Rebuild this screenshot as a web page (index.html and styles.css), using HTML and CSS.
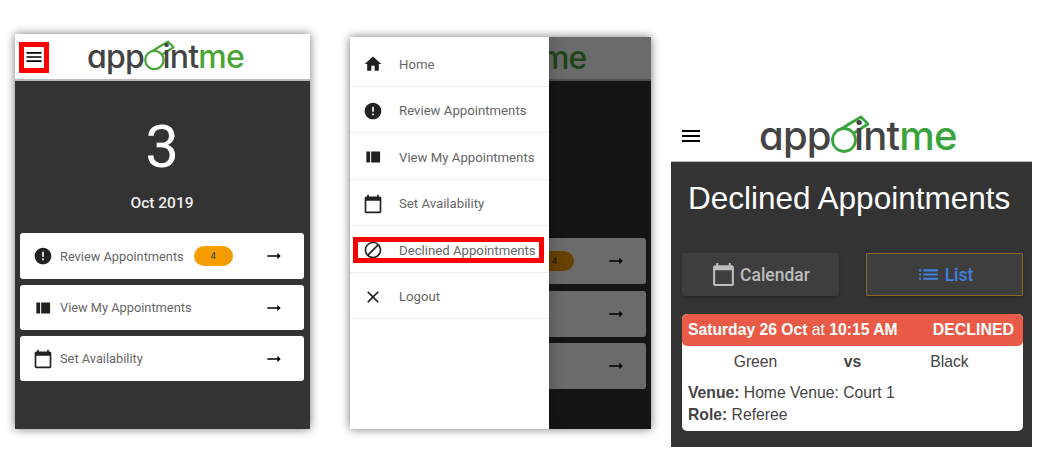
FILE: index.html
```html
<!DOCTYPE html>
<html lang="en">
  <head>
    <meta charset="UTF-8" />
    <meta name="viewport" content="width=device-width, initial-scale=1.0" />
    <title>Appointme help</title>
    <link rel="stylesheet" href="styles.css">
  </head>
  <body>
    <!-- Shared icons -->
    <svg class="icon-defs" aria-hidden="true">
      <symbol id="i-menu" viewBox="0 0 24 24"><path d="M3 18h18v-2H3v2zm0-5h18v-2H3v2zm0-7v2h18V6H3z"/></symbol>
      <symbol id="i-home" viewBox="0 0 24 24"><path d="M10 20v-6h4v6h5v-8h3L12 3 2 12h3v8z"/></symbol>
      <symbol id="i-error" viewBox="0 0 24 24"><path d="M12 2C6.48 2 2 6.48 2 12s4.48 10 10 10 10-4.48 10-10S17.52 2 12 2zm1 15h-2v-2h2v2zm0-4h-2V7h2v6z"/></symbol>
      <symbol id="i-view" viewBox="0 0 24 24"><path d="M4 5.500h4.500v13H4zM9.800 5.500H20.500v13H9.800z"/></symbol>
      <symbol id="i-calendar" viewBox="0 0 24 24"><path d="M20 3h-1V1h-2v2H7V1H5v2H4c-1.100 0-2 .9-2 2v16c0 1.100.9 2 2 2h16c1.100 0 2-.9 2-2V5c0-1.100-.9-2-2-2zm0 18H4V8h16v13z"/></symbol>
      <symbol id="i-arrow" viewBox="0 0 24 24"><path d="M16.010 11H4v2h12.010v3L20 12l-3.990-4z"/></symbol>
      <symbol id="i-block" viewBox="0 0 24 24"><path d="M12 2C6.480 2 2 6.480 2 12s4.480 10 10 10 10-4.480 10-10S17.520 2 12 2zM4 12c0-4.420 3.580-8 8-8 1.850 0 3.550.63 4.900 1.690L5.690 16.900C4.630 15.550 4 13.850 4 12zm8 8c-1.850 0-3.550-.63-4.900-1.690L18.310 7.100C19.370 8.450 20 10.150 20 12c0 4.420-3.580 8-8 8z"/></symbol>
      <symbol id="i-close" viewBox="0 0 24 24"><path d="M19 6.410L17.590 5 12 10.590 6.410 5 5 6.410 10.590 12 5 17.590 6.410 19 12 13.410 17.590 19 19 17.590 13.410 12z"/></symbol>
      <symbol id="i-list" viewBox="0 0 24 24"><path d="M3 13h2v-2H3v2zm0 4h2v-2H3v2zm0-8h2V7H3v2zm4 4h14v-2H7v2zm0 4h14v-2H7v2zM7 7v2h14V7H7z"/></symbol>
      <symbol id="i-whistle" viewBox="0 0 40 38"><path d="M9 15L18 9L30 2L37 9L23 18" fill="none" stroke="currentColor" stroke-width="2.800" stroke-linejoin="round"/><circle cx="13" cy="25" r="11.500" fill="#fff" stroke="currentColor" stroke-width="2.800"/></symbol>
    </svg>

    <div class="shots">
      <!-- Home screen -->
      <section class="phone phone-home">
        <header class="top-bar">
          <button class="menu-btn menu-btn-marked"><svg class="icon"><use href="#i-menu"/></svg></button>
          <div class="logo"><span>app</span><svg class="whistle"><use href="#i-whistle"/></svg><span>int</span><span class="logo-green">me</span></div>
        </header>
        <div class="home-body">
          <div class="day">3</div>
          <div class="month">Oct 2019</div>
          <div class="home-list">
            <a class="home-row"><svg class="icon"><use href="#i-error"/></svg><span class="row-label">Review Appointments</span><span class="badge">4</span><svg class="icon row-arrow"><use href="#i-arrow"/></svg></a>
            <a class="home-row"><svg class="icon"><use href="#i-view"/></svg><span class="row-label">View My Appointments</span><svg class="icon row-arrow"><use href="#i-arrow"/></svg></a>
            <a class="home-row"><svg class="icon"><use href="#i-calendar"/></svg><span class="row-label">Set Availability</span><svg class="icon row-arrow"><use href="#i-arrow"/></svg></a>
          </div>
        </div>
      </section>

      <!-- Same screen with the drawer open, only what shows past the drawer -->
      <section class="phone phone-drawer">
        <header class="top-bar">
          <div class="logo"><span class="logo-green">me</span></div>
        </header>
        <div class="home-list">
          <a class="home-row"><span class="badge">4</span><svg class="icon row-arrow"><use href="#i-arrow"/></svg></a>
          <a class="home-row"><svg class="icon row-arrow"><use href="#i-arrow"/></svg></a>
          <a class="home-row"><svg class="icon row-arrow"><use href="#i-arrow"/></svg></a>
        </div>
        <div class="scrim"></div>
        <nav class="drawer">
          <a class="drawer-item"><svg class="icon"><use href="#i-home"/></svg>Home</a>
          <a class="drawer-item"><svg class="icon"><use href="#i-error"/></svg>Review Appointments</a>
          <a class="drawer-item"><svg class="icon"><use href="#i-view"/></svg>View My Appointments</a>
          <a class="drawer-item"><svg class="icon"><use href="#i-calendar"/></svg>Set Availability</a>
          <a class="drawer-item drawer-item-marked"><svg class="icon"><use href="#i-block"/></svg>Declined Appointments</a>
          <a class="drawer-item"><svg class="icon"><use href="#i-close"/></svg>Logout</a>
        </nav>
      </section>

      <!-- Declined appointments screen -->
      <section class="phone-declined">
        <header class="declined-bar">
          <button class="menu-btn"><svg class="icon"><use href="#i-menu"/></svg></button>
          <div class="logo logo-large"><span>app</span><svg class="whistle"><use href="#i-whistle"/></svg><span>int</span><span class="logo-green">me</span></div>
        </header>
        <div class="declined-body">
          <h1>Declined Appointments</h1>
          <div class="view-switch">
            <button class="view-btn"><svg class="icon"><use href="#i-calendar"/></svg>Calendar</button>
            <button class="view-btn view-btn-active"><svg class="icon"><use href="#i-list"/></svg>List</button>
          </div>
          <article class="card">
            <div class="card-head">
              <span><b>Saturday 26 Oct</b> at <b>10:15 AM</b></span>
              <b class="card-status">DECLINED</b>
            </div>
            <div class="teams"><span>Green</span><b>vs</b><span>Black</span></div>
            <p><b>Venue:</b> Home Venue: Court 1</p>
            <p><b>Role:</b> Referee</p>
          </article>
        </div>
      </section>
    </div>
  </body>
</html>
```

FILE: styles.css
```css
/* Basic reset */
body {
  margin: 0;
  background-color: #fff;
  font-family: Roboto, sans-serif;
  color: #333;
}

.icon-defs {
  display: none;
}

.icon {
  width: 20px;
  height: 20px;
  flex: none;
  fill: currentColor;
}

.shots {
  display: flex;
  align-items: flex-start;
}

/* Phone frames */
.phone {
  position: relative;
  display: flex;
  flex-direction: column;
  overflow: hidden;
  background-color: #333;
  box-shadow: 0 0 9px rgba(0, 0, 0, 0.55);
}

.phone-home {
  width: 295px;
  height: 395px;
  margin: 34px 0 0 15px;
}

.phone-drawer {
  width: 301px;
  height: 392px;
  margin: 37px 0 0 40px;
}

.top-bar {
  display: flex;
  align-items: center;
  height: 47px;
  box-sizing: border-box;
  flex: none;
  background-color: #fff;
  border-bottom: 2px solid #b9b9b9;
}

.phone-drawer .top-bar {
  height: 44px;
}

.menu-btn {
  display: flex;
  align-items: center;
  justify-content: center;
  padding: 0;
  border: none;
  background: none;
  color: #000;
}

.menu-btn-marked {
  width: 30px;
  height: 31px;
  box-sizing: border-box;
  margin: 1px 0 0 4px;
  border: 5px solid #f00;
}

.logo {
  margin-left: 38px;
  font-family: Inter, sans-serif;
  font-size: 32px;
  font-weight: 500;
  font-feature-settings: "cv11";
  line-height: 1;
  letter-spacing: -0.8px;
  color: #444;
  white-space: nowrap;
}

.phone-drawer .logo {
  margin-left: 191px;
}

.logo-green {
  color: #4aa537;
}

.whistle {
  width: 1em;
  height: 0.95em;
  margin-right: -0.42em;
  vertical-align: -0.07em;
  color: #4aa537;
}

/* Home screen */
.home-body {
  display: flex;
  flex-direction: column;
  align-items: center;
  padding: 31px 6px 0 5px;
}

.day {
  font-size: 60px;
  line-height: 70px;
  color: #fff;
}

.month {
  margin-top: 11px;
  font-size: 15.500px;
  font-weight: 500;
  line-height: 20px;
  color: #eee;
}

.home-list {
  display: flex;
  flex-direction: column;
  gap: 6px;
  align-self: stretch;
  margin-top: 20px;
}

.phone-drawer .home-list {
  gap: 6.5px;
  margin: 157px 5px 0;
}

.home-row {
  display: flex;
  align-items: center;
  height: 45px;
  padding: 0 20px 0 13px;
  border-radius: 3px;
  background-color: #fff;
  color: #222;
}

.phone-home .home-row:first-child,
.phone-drawer .home-row {
  height: 46px;
}

.row-label {
  margin-left: 7px;
  font-size: 12.800px;
  color: #666;
}

.badge {
  width: 39px;
  height: 20px;
  margin-left: 10px;
  border-radius: 10px;
  background-color: #f59d00;
  font-size: 9px;
  line-height: 21px;
  text-align: center;
  color: #333;
}

.phone-drawer .badge {
  margin-left: auto;
}

.row-arrow {
  margin-left: auto;
  color: #000;
}

.phone-drawer .badge + .row-arrow {
  margin-left: 32px;
}

/* Drawer */
.scrim {
  position: absolute;
  inset: 0;
  background-color: rgba(0, 0, 0, 0.58);
}

.drawer {
  position: absolute;
  top: 0;
  left: 0;
  bottom: 0;
  width: 199px;
  background-color: #fff;
  box-shadow: 0 0 14px rgba(0, 0, 0, 0.3);
}

.drawer-item {
  position: relative;
  display: flex;
  align-items: center;
  gap: 16px;
  height: 46.500px;
  box-sizing: border-box;
  padding: 3px 0 0 13px;
  border-bottom: 1px solid #eee;
  font-size: 13.200px;
  color: #666;
}

.drawer-item:first-child {
  height: 49.500px;
  padding-top: 6px;
}

.drawer-item .icon {
  color: #222;
}

.drawer-item-marked::after {
  content: "";
  position: absolute;
  top: 11px;
  left: 3px;
  width: 191px;
  height: 26px;
  box-sizing: border-box;
  border: 5px solid #f00;
}

/* Declined appointments */
.phone-declined {
  width: 361px;
  margin: 115px 0 0 20px;
}

.declined-bar {
  display: flex;
  align-items: center;
  height: 47px;
  box-sizing: border-box;
  padding: 0 0 4px 8px;
  border-bottom: 1px solid #bbb;
}

.declined-bar .icon {
  width: 24px;
  height: 24px;
}

.logo-large {
  margin-left: 56px;
  font-size: 40px;
  letter-spacing: -0.8px;
}

.logo-large .logo-green,
.logo-large .whistle {
  color: #3ba33b;
}

.declined-body {
  height: 285px;
  box-sizing: border-box;
  padding: 18px 9px 0 11px;
  background-color: #333;
  font-family: "Liberation Sans", Arial, sans-serif;
}

.declined-body h1 {
  margin: 0;
  padding-left: 6px;
  font-size: 31.500px;
  font-weight: 400;
  line-height: 36px;
  color: #fff;
}

.view-switch {
  display: flex;
  justify-content: space-between;
  margin-top: 37px;
}

.view-btn {
  display: flex;
  align-items: center;
  justify-content: center;
  gap: 4px;
  width: 157px;
  height: 43px;
  padding: 0;
  border: 1px solid transparent;
  border-radius: 3px;
  background-color: #3e3e3e;
  font-family: Roboto, sans-serif;
  font-size: 17.500px;
  font-weight: 500;
  color: #bdbdbd;
  box-shadow: 0 1px 3px rgba(0, 0, 0, 0.25);
}

.view-btn .icon {
  width: 25px;
  height: 25px;
}

.view-btn-active {
  border: 1.500px solid #8f6a1a;
  border-radius: 1px;
  color: #3f82e0;
}

.card {
  margin-top: 18px;
  width: 341px;
  height: 117px;
  border-radius: 5px;
  overflow: hidden;
  background-color: #fff;
  font-size: 15.700px;
  color: #444;
}

.card-head {
  display: flex;
  justify-content: space-between;
  align-items: center;
  height: 32px;
  padding: 0 9px 0 6px;
  border-radius: 5px;
  background-color: #e95b47;
  color: #fff;
}

.card-status {
  font-size: 15.900px;
}

.teams {
  display: grid;
  grid-template-columns: 97px 97px 97px;
  justify-content: center;
  margin: 5px 0 9px;
  line-height: 22px;
  text-align: center;
}

.card p {
  margin: 0;
  padding-left: 6px;
  line-height: 22px;
}
```
